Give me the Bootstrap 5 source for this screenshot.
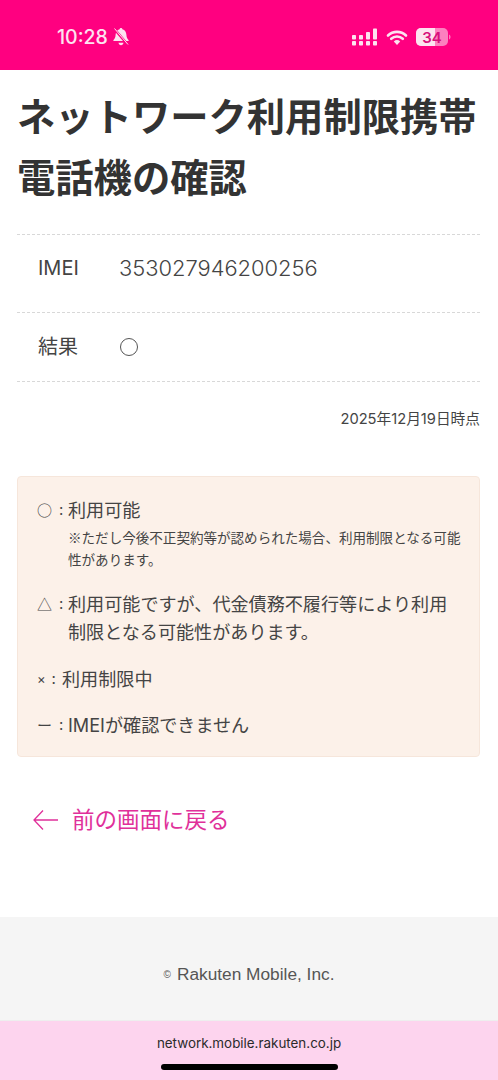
<!DOCTYPE html>
<html lang="ja">
<head>
<meta charset="utf-8">
<meta name="viewport" content="width=device-width, initial-scale=1">
<link href="https://cdn.jsdelivr.net/npm/bootstrap@5.3.0/dist/css/bootstrap.min.css" rel="stylesheet">
<style>
html,body{height:1080px;overflow:hidden}
body{font-family:Inter,"Noto Sans CJK JP","Liberation Sans",sans-serif;color:#444;background:#fff;width:498px}
.status-bar{height:70px;background:#ff0080;color:#fde;padding:22px 47px 0 57px;align-items:flex-start}
.status-time{font-size:19.5px;font-weight:500;line-height:30px;color:#fde3f0}
.page-title{font-family:"Noto Sans CJK JP",sans-serif;font-size:38.300px;font-weight:700;line-height:61px;color:#333;margin:14px 0 28px 17px;white-space:nowrap;height:122px}
.info-wrap{margin:0 18px 0 17px}
.info-line{border-top:1px dashed #d8d8d8;font-size:20px;padding-left:21px;align-items:center;color:#444}
.info-line.first{height:78px;padding-bottom:11px}
.info-line.second{height:70px}
.info-line.last{border-bottom:1px dashed #d8d8d8}
.info-key{width:81px}
.imei-num{font-size:21.900px;font-weight:300}
.ring{width:18px;height:18px;border:1px solid #555;border-radius:50%;display:block;margin-left:1px}
.as-of{font-size:14.700px;text-align:right;line-height:20px;margin:27px 0 47px;color:#444}
.note-box{height:281px;background:#fcf1e9;border:1px solid #f6e6db;border-radius:4px;margin:0 18px 0 17px;padding:19px 18px 0 19px;font-size:18.100px;color:#444}
.note-line{display:flex;line-height:28px;margin-bottom:18px}
.note-line.first-note{margin-bottom:20px}
.note-line.tight{margin-bottom:19px}
.note-mark{flex:none;width:31px;display:flex;align-items:center;height:28px;font-size:15px;gap:7px;color:#444}
.note-mark.narrow{width:25px;gap:6px}
.mark-glyph{font-family:"Noto Sans CJK JP",sans-serif}
.mark-x{font-size:13px}
.note-small{font-size:13.550px;line-height:22px;margin-top:2px;color:#444;font-family:"Noto Sans CJK JP",sans-serif}
.back-link{color:#e0309a;font-size:22.500px;line-height:32px;text-decoration:none;margin:47px 0 0 33px;gap:14px;height:32px;align-items:center}
.copy-bar{background:#f5f5f5;height:104px;margin-top:81px;font-family:"Liberation Sans",sans-serif;font-size:17.300px;color:#555;align-items:center;justify-content:center;gap:6px;padding-top:12px;border-bottom:1px solid #eee}
.copy-mark{font-size:10px}
.url-bar{background:#fdd4ee;height:59px;font-size:13.400px;color:#2a2a2a;flex-direction:column;align-items:center;padding-top:12px}
.home-bar{width:177px;height:6px;background:#000;border-radius:3px;margin-top:11px}
</style>
</head>
<body>
<div class="status-bar d-flex justify-content-between">
  <div class="d-flex align-items-center gap-1">
    <span class="status-time">10:28</span>
    <svg width="18" height="20" viewBox="0 0 18 20" fill="#fde3f0"><path d="M9 1c.8 0 1.400.6 1.400 1.300 2.600.6 3.800 2.900 4 5.500.1 2.300.8 4.100 2.100 5.200.4.500 0 1-.5 1H2c-.5 0-.9-.5-.5-1 1.300-1.100 2-2.900 2.100-5.200.2-2.600 1.400-4.900 4-5.500C7.600 1.600 8.200 1 9 1z"/><path d="M6.500 15.800h5c-.2 1.400-1.200 2.400-2.500 2.400s-2.300-1-2.500-2.400z"/><path d="M1.500 1l14.500 17" stroke="#ff0080" stroke-width="2.600"/><path d="M2.500 1.500l13.500 16" stroke="#fde3f0" stroke-width="1"/></svg>
  </div>
  <div class="d-flex align-items-center gap-2" style="height:30px">
    <svg width="26" height="18" viewBox="0 0 26 18" fill="#fde3f0"><rect x="0" y="7" width="4" height="4.500" rx=".8"/><rect x="0" y="13" width="4" height="4.500" rx=".8"/><rect x="7" y="7" width="4" height="4.500" rx=".8"/><rect x="7" y="13" width="4" height="4.500" rx=".8"/><rect x="14" y="4" width="4" height="7.500" rx=".8"/><rect x="14" y="13" width="4" height="4.500" rx=".8"/><rect x="21" y="0.500" width="4" height="11" rx=".8"/><rect x="21" y="13" width="4" height="4.500" rx=".8"/></svg>
    <svg width="22" height="17" viewBox="0 0 22 17"><path d="M2 6.500a13 13 0 0 1 18 0M5.200 9.800a8.500 8.500 0 0 1 11.600 0" fill="none" stroke="#fde3f0" stroke-width="2.600" stroke-linecap="round"/><path d="M7.800 12.500a4.800 4.800 0 0 1 6.400 0L11 16z" fill="#fde3f0"/></svg>
    <svg width="35" height="18" viewBox="0 0 35 18"><rect x="0" y="0" width="32" height="18" rx="5" fill="#fc80bf"/><path d="M5 0H19v18H5a5 5 0 0 1-5-5V5a5 5 0 0 1 5-5z" fill="#fde3f0"/><path d="M33 6.500c1 .4 1.500 1.300 1.500 2.500s-.5 2.100-1.500 2.500z" fill="#fc80bf"/><text x="16" y="14.500" text-anchor="middle" font-family="Inter,Liberation Sans,sans-serif" font-size="15" font-weight="600" fill="#d8107c">34</text></svg>
  </div>
</div>

<h1 class="page-title">ネットワーク利用制限携帯<br>電話機の確認</h1>

<div class="info-wrap">
  <div class="info-line first d-flex"><span class="info-key">IMEI</span><span class="imei-num">353027946200256</span></div>
  <div class="info-line second last d-flex"><span class="info-key">結果</span><span class="ring"></span></div>
  <div class="as-of">2025年12月19日時点</div>
</div>

<div class="note-box">
  <div class="note-line first-note"><span class="note-mark"><span class="mark-glyph">○</span><span>:</span></span><div><div>利用可能</div><div class="note-small">※ただし今後不正契約等が認められた場合、利用制限となる可能性があります。</div></div></div>
  <div class="note-line tight"><span class="note-mark"><span class="mark-glyph">△</span><span>:</span></span><div>利用可能ですが、代金債務不履行等により利用制限となる可能性があります。</div></div>
  <div class="note-line"><span class="note-mark narrow"><span class="mark-x">×</span><span>:</span></span><div>利用制限中</div></div>
  <div class="note-line"><span class="note-mark"><span class="mark-glyph">ー</span><span>:</span></span><div>IMEIが確認できません</div></div>
</div>

<a href="#" class="back-link d-flex">
  <svg width="25" height="22" viewBox="0 0 25 22" fill="none" stroke="#e0309a" stroke-width="1.300"><path d="M25 11H1M10 1.500L1 11l9 9.500"/></svg>
  <span>前の画面に戻る</span>
</a>

<div class="copy-bar d-flex"><span class="copy-mark">©</span><span>Rakuten Mobile, Inc.</span></div>
<div class="url-bar d-flex"><span>network.mobile.rakuten.co.jp</span><div class="home-bar"></div></div>
<script src="https://cdn.jsdelivr.net/npm/bootstrap@5.3.0/dist/js/bootstrap.bundle.min.js"></script>
</body>
</html>
